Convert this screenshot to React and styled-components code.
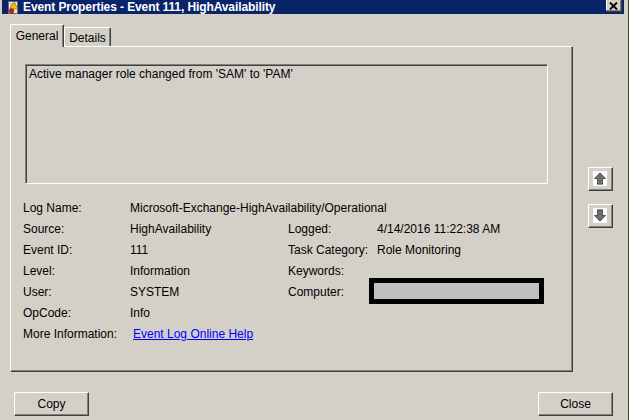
import React from "react";
import styled, { createGlobalStyle } from "styled-components";

const GlobalStyle = createGlobalStyle`
  html, body {
    margin: 0;
    padding: 0;
    background: #d4d0c8;
  }
  body {
    font-family: "Liberation Sans", Arial, sans-serif;
    font-size: 12px;
    color: #000;
  }
`;

const Window = styled.div`
  width: 629px;
  height: 420px;
  box-sizing: border-box;
  background: #d4d0c8;
  padding: 0 4px 0 2px;
  border-right: 1px solid #404040;
  overflow: hidden;
`;

const TitleBar = styled.div`
  height: 14px;
  background: #0a246a;
  display: flex;
  align-items: center;
  padding-left: 5px;
  color: #fff;
  font-weight: bold;
  font-size: 12px;
  line-height: 14px;
`;

const TitleText = styled.span`
  margin-left: 4px;
  flex: 1;
  white-space: nowrap;
  letter-spacing: -0.1px;
`;

const CloseBox = styled.div`
  align-self: flex-start;
  width: 16px;
  height: 12px;
  box-sizing: border-box;
  margin-right: 2px;
  background: #d4d0c8;
  border-right: 1px solid #404040;
  border-bottom: 1px solid #404040;
  box-shadow: inset -1px -1px #808080, inset 1px 0 #fff;
  display: flex;
  align-items: center;
  justify-content: center;
`;

const Body = styled.div`
  padding: 10px 0 0 8px;
`;

const MainRow = styled.div`
  display: flex;
  align-items: flex-start;
`;

const TabControl = styled.div`
  width: 563px;
`;

const TabStrip = styled.div`
  display: flex;
  align-items: flex-end;
  height: 22px;
  position: relative;
  z-index: 1;
`;

const Tab = styled.div`
  box-sizing: border-box;
  width: ${(p) => p.$width}px;
  height: ${(p) => (p.$active ? "23px" : "19px")};
  margin-bottom: ${(p) => (p.$active ? "-1px" : "0")};
  padding-top: ${(p) => (p.$active ? "3px" : "2px")};
  text-align: center;
  background: #d4d0c8;
  border-top: 1px solid #fff;
  border-left: 1px solid #fff;
  border-right: 1px solid #404040;
  box-shadow: inset -1px 0 #808080;
  border-radius: 2px 2px 0 0;
  line-height: 16px;
  white-space: nowrap;
`;

const Panel = styled.div`
  box-sizing: border-box;
  height: 326px;
  background: #d4d0c8;
  border-top: 1px solid #fff;
  border-left: 1px solid #fff;
  border-right: 1px solid #404040;
  border-bottom: 1px solid #404040;
  box-shadow: inset -1px -1px #808080;
  padding: 17px 0 0 12px;
`;

const MessageBox = styled.div`
  box-sizing: border-box;
  width: 523px;
  height: 120px;
  margin-left: 2px;
  border-top: 1px solid #808080;
  border-left: 1px solid #808080;
  border-right: 1px solid #fff;
  border-bottom: 1px solid #fff;
  box-shadow: inset 1px 1px #404040;
  padding: 2px 3px;
  line-height: 15px;
`;

const Fields = styled.div`
  display: grid;
  grid-template-columns: 107px 158px 89px 1fr;
  grid-auto-rows: 21px;
  margin-top: 14px;
  line-height: 21px;
  white-space: nowrap;
`;

const Cell = styled.div`
  grid-column: ${(p) => p.$span || "auto"};
`;

const Redacted = styled.div`
  box-sizing: border-box;
  width: 175px;
  height: 26px;
  margin: -4px 0 -1px -8px;
  border: 5px solid #000;
  background: #c0c0c0;
`;

const Link = styled.a`
  color: #0000ff;
  text-decoration: underline;
  margin-left: 3px;
  cursor: pointer;
`;

const SideButtons = styled.div`
  display: flex;
  flex-direction: column;
  gap: 13px;
  margin-left: 15px;
  padding-top: 143px;
`;

const ArrowButton = styled.div`
  box-sizing: border-box;
  width: 25px;
  height: 24px;
  background: #d4d0c8;
  border-top: 1px solid #fff;
  border-left: 1px solid #fff;
  border-right: 1px solid #404040;
  border-bottom: 1px solid #404040;
  box-shadow: inset -1px -1px #808080;
  display: flex;
  align-items: center;
  justify-content: center;
`;

const ArrowFace = styled.div`
  width: 14px;
  height: 15px;
  background: #fff;
  display: flex;
  align-items: center;
  justify-content: center;
  margin: 0 1px 1px 0;
`;

const Footer = styled.div`
  display: flex;
  justify-content: space-between;
  width: 599px;
  margin-top: 20px;
  padding-left: 4px;
`;

const Button = styled.button`
  box-sizing: border-box;
  width: 75px;
  height: 24px;
  background: #d4d0c8;
  font-family: inherit;
  font-size: 12px;
  color: #000;
  border-top: 1px solid #fff;
  border-left: 1px solid #fff;
  border-right: 1px solid #404040;
  border-bottom: 1px solid #404040;
  box-shadow: inset -1px -1px #808080;
  border-radius: 0;
  padding: 0;
`;

function TitleIcon() {
  return (
    <svg width="12" height="13" viewBox="0 0 12 13">
      <rect x="1.5" y="0.5" width="9" height="12" fill="#e8e8e8" stroke="#6a6a6a" />
      <path d="M3 3h6M3 5h6M3 7h6" stroke="#9a9a9a" />
      <path d="M7 1 L11 8 L3 8 Z" fill="#f5c400" stroke="#8a6a00" strokeWidth="0.6" />
      <circle cx="4.5" cy="10" r="2.3" fill="#d42020" stroke="#7a0000" strokeWidth="0.6" />
    </svg>
  );
}

function CloseIcon() {
  return (
    <svg width="9" height="8" viewBox="0 0 9 8">
      <path d="M1 0.5 L8 7.5 M8 0.5 L1 7.5" stroke="#000" strokeWidth="1.8" />
    </svg>
  );
}

function Arrow({ down }) {
  return (
    <svg
      width="12"
      height="13"
      viewBox="0 0 12 13"
      style={down ? { transform: "rotate(180deg)" } : undefined}
    >
      <path
        d="M6 0.8 L11.5 6.5 L8.5 6.5 L8.5 12.2 L3.5 12.2 L3.5 6.5 L0.5 6.5 Z"
        fill="#6e6e6e"
        stroke="#3c3c3c"
        strokeWidth="0.8"
      />
    </svg>
  );
}

export default function App() {
  return (
    <>
      <GlobalStyle />
      <Window>
        <TitleBar>
          <TitleIcon />
          <TitleText>Event Properties - Event 111, HighAvailability</TitleText>
          <CloseBox>
            <CloseIcon />
          </CloseBox>
        </TitleBar>
        <Body>
          <MainRow>
            <TabControl>
              <TabStrip>
                <Tab $active $width={54}>General</Tab>
                <Tab $width={47}>Details</Tab>
              </TabStrip>
              <Panel>
                <MessageBox>Active manager role changed from 'SAM' to 'PAM'</MessageBox>
                <Fields>
                  <Cell>Log Name:</Cell>
                  <Cell $span="2 / span 3">Microsoft-Exchange-HighAvailability/Operational</Cell>

                  <Cell>Source:</Cell>
                  <Cell>HighAvailability</Cell>
                  <Cell>Logged:</Cell>
                  <Cell>4/14/2016 11:22:38 AM</Cell>

                  <Cell>Event ID:</Cell>
                  <Cell>111</Cell>
                  <Cell>Task Category:</Cell>
                  <Cell>Role Monitoring</Cell>

                  <Cell>Level:</Cell>
                  <Cell>Information</Cell>
                  <Cell>Keywords:</Cell>
                  <Cell />

                  <Cell>User:</Cell>
                  <Cell>SYSTEM</Cell>
                  <Cell>Computer:</Cell>
                  <Cell>
                    <Redacted />
                  </Cell>

                  <Cell>OpCode:</Cell>
                  <Cell $span="2 / span 3">Info</Cell>

                  <Cell>More Information:</Cell>
                  <Cell $span="2 / span 3">
                    <Link>Event Log Online Help</Link>
                  </Cell>
                </Fields>
              </Panel>
            </TabControl>
            <SideButtons>
              <ArrowButton>
                <ArrowFace>
                  <Arrow />
                </ArrowFace>
              </ArrowButton>
              <ArrowButton>
                <ArrowFace>
                  <Arrow down />
                </ArrowFace>
              </ArrowButton>
            </SideButtons>
          </MainRow>
          <Footer>
            <Button>Copy</Button>
            <Button>Close</Button>
          </Footer>
        </Body>
      </Window>
    </>
  );
}
